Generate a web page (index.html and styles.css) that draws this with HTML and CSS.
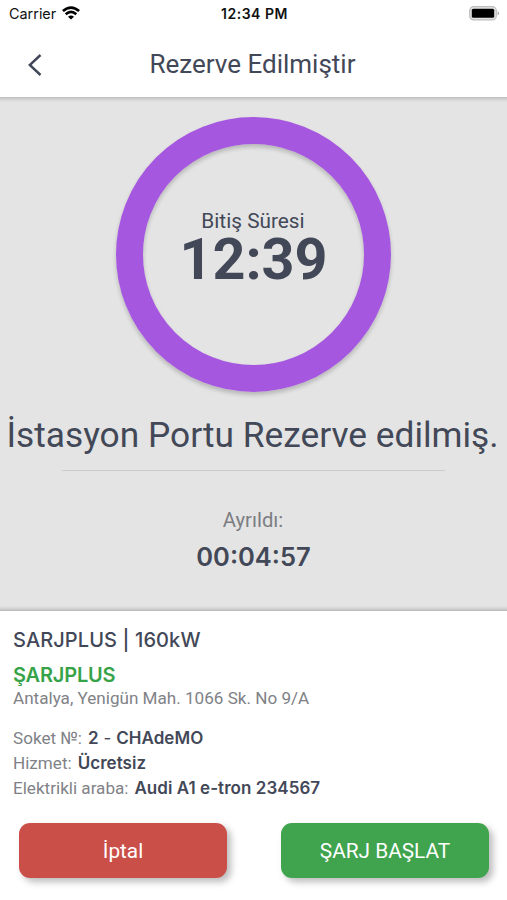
FILE: index.html
```html
<!DOCTYPE html>
<html lang="tr">
<head>
<meta charset="utf-8">
<title>Rezerve Edilmiştir</title>
<link rel="stylesheet" href="styles.css">
</head>
<body>
<div class="screen">
  <div class="status">
    <div class="carrier"><span>Carrier</span>
      <svg class="wifi" width="18" height="14" viewBox="0 0 18 14" fill="none" stroke="#000" stroke-width="2.7"><path d="M.9 5.1Q9-1.9 17.1 5.1M3.7 8.2Q9 3.6 14.3 8.2"/><path d="M9 13.6L6 10.8Q9 8.4 12 10.8Z" fill="#000" stroke="none"/></svg>
    </div>
    <div class="clock">12:34 PM</div>
    <svg class="battery" width="31" height="15" viewBox="0 0 31 15"><rect x=".7" y=".7" width="26.6" height="13.2" rx="4" fill="#e4e4e4" stroke="#bdbdbd" stroke-width="1.2"/><rect x="2.8" y="2.8" width="22.4" height="9" rx="1.5" fill="#000"/><path d="M28.6 5Q31.6 7.3 28.6 9.6Z" fill="#aaa"/></svg>
  </div>
  <header class="header">
    <svg class="back" width="14" height="22" viewBox="0 0 14 22" fill="none" stroke="#424857" stroke-width="2.4"><path d="M12.5 1L1.8 11L12.5 21"/></svg>
    <h1>Rezerve Edilmiştir</h1>
  </header>
  <main class="main">
    <div class="ring"><div class="label">Bitiş Süresi</div><div class="time">12:39</div></div>
    <p class="message">İstasyon Portu Rezerve edilmiş.</p>
    <div class="rule"></div>
    <div class="elapsed-label">Ayrıldı:</div>
    <div class="elapsed">00:04:57</div>
  </main>
  <section class="details">
    <h2>SARJPLUS | 160kW</h2>
    <div class="brand">ŞARJPLUS</div>
    <div class="address">Antalya, Yenigün Mah. 1066 Sk. No 9/A</div>
    <div class="rows">
      <div class="row"><span class="key">Soket №:</span><span class="value"><b>2</b> - <b>CHAdeMO</b></span></div>
      <div class="row"><span class="key">Hizmet:</span><span class="value"><b>Ücretsiz</b></span></div>
      <div class="row"><span class="key">Elektrikli araba:</span><span class="value"><b>Audi A1 e-tron 234567</b></span></div>
    </div>
    <div class="actions"><button class="cancel">İptal</button><button class="start">ŞARJ BAŞLAT</button></div>
  </section>
</div>
</body>
</html>
```
FILE: styles.css
```css
* { box-sizing: border-box; }
body, h1, h2, p { margin: 0; }
body { font-family: Roboto, sans-serif; color: #424857; background: #fff; }
.screen { width: 507px; height: 900px; display: flex; flex-direction: column; overflow: hidden; white-space: nowrap; }
.status { height: 28px; display: grid; grid-template-columns: 1fr auto 1fr; align-items: center; padding: 0 7px 0 9px; color: #111; font: 14px/28px Inter, sans-serif; }
.carrier { display: flex; gap: 6px; align-items: center; font-size: 14.4px; }
.wifi { margin-top: -2px; }
.clock { font-weight: 600; font-size: 14px; letter-spacing: .5px; }
.battery { justify-self: end; margin-top: -2px; }
.header { height: 69px; display: grid; grid-template-columns: 70px 1fr 72px; align-items: center; }
.back { margin-left: 28px; margin-top: 5px; }
h1 { font-size: 26px; line-height: 40px; font-weight: 400; text-align: center; padding-top: 3px; }
.main { height: 514px; background: linear-gradient(#bdbdbd, #d0d0d0 2px, #e4e4e4 5px, #e4e4e4 calc(100% - 5px), #d0d0d0 calc(100% - 2px), #b8b8b8); display: flex; flex-direction: column; align-items: center; padding-top: 20px; }
.ring { width: 275px; height: 275px; flex: none; border: 27.5px solid #a657df; border-radius: 50%; box-shadow: 0 3px 4px #0003, inset 0 3px 4px #0003; text-align: center; padding-top: 65px; }
.label { font-size: 20.8px; line-height: 24px; margin-left: -1px; }
.time { font-size: 57.5px; line-height: 54px; font-weight: 700; }
.message { font-size: 35.3px; line-height: 44px; margin-top: 21px; margin-left: -2px; }
.rule { width: 383px; height: 1px; background: #cbcbcb; margin-top: 13px; }
.elapsed-label { color: #7b7d82; font-size: 20.3px; line-height: 26px; margin-top: 36px; margin-left: -1px; }
.elapsed { font: 600 25.5px/34px Inter, sans-serif; margin-top: 7px; }
.details { height: 289px; padding: 0 13px; display: flex; flex-direction: column; }
h2 { font: 500 20px/28px Inter, sans-serif; margin-top: 15px; letter-spacing: .1px; }
.brand { color: #37a348; font: 600 20px/24px Inter, sans-serif; margin-top: 9px; letter-spacing: -.2px; }
.address { color: #808287; font-size: 17.1px; line-height: 22px; }
.rows { margin-top: 17px; }
.row { display: flex; gap: 6px; height: 25px; line-height: 25px; align-items: baseline; }
.key { color: #808287; font-size: 17.1px; }
.value { font: 400 17px/25px Inter, sans-serif; letter-spacing: .05px; }
.value b { font-weight: 600; }
.actions { display: flex; justify-content: space-between; padding: 0 5px 0 6px; margin-top: 22px; }
button { width: 208px; height: 55px; border: 0; border-radius: 11px; color: #fff; font: 400 20.8px/53px Roboto, sans-serif; padding: 2px 0 0; box-shadow: 4px 4px 7px #0004; }
.cancel { background: #cb4f49; }
.start { background: #40a34d; }
```
